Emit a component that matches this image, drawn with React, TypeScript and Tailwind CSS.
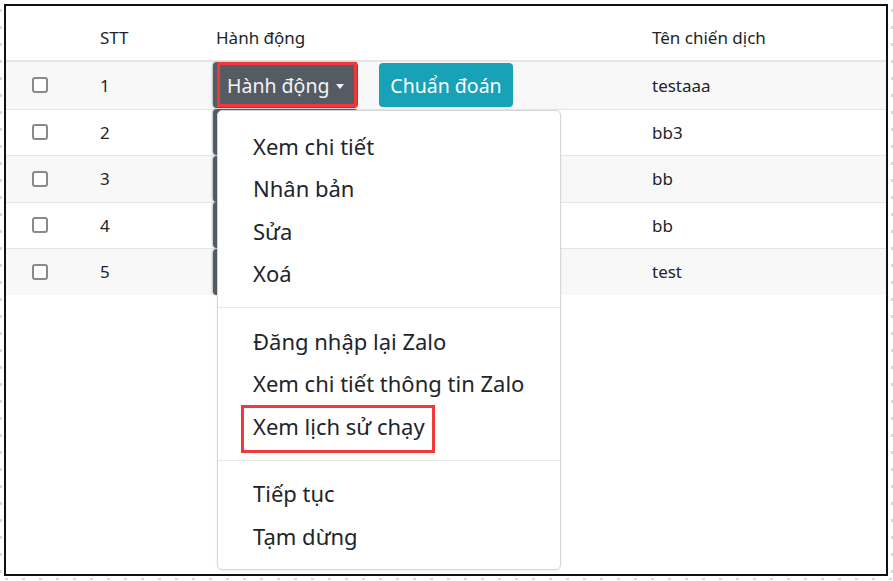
import * as React from "react";

const rows = [
  { id: 1, name: "testaaa" },
  { id: 2, name: "bb3" },
  { id: 3, name: "bb" },
  { id: 4, name: "bb" },
  { id: 5, name: "test" },
];

const menuGroups = [
  ["Xem chi tiết", "Nhân bản", "Sửa", "Xoá"],
  ["Đăng nhập lại Zalo", "Xem chi tiết thông tin Zalo", "Xem lịch sử chạy"],
  ["Tiếp tục", "Tạm dừng"],
];

function Checkbox() {
  return <span className="block h-[16px] w-[16px] rounded-[3px] border-2 border-[#8a8a8a] bg-white" />;
}

function ActionButton({ highlight }: { highlight?: boolean }) {
  return (
    <div className="relative flex h-[46px] w-[145px] shrink-0 items-center rounded-[4px] bg-[#555b62] pl-[14px] text-[19.5px] text-[#f4f4f4] shadow-[-1px_0_2px_rgba(0,0,0,0.25)]">
      <span>Hành động</span>
      <span className="ml-[7px] mt-[2px] h-0 w-0 border-x-[4px] border-t-[5px] border-x-transparent border-t-[#f4f4f4]" />
      {highlight && (
        <span className="pointer-events-none absolute bottom-[1px] left-[4px] right-[1px] top-0 border-[3px] border-[#f2383b]" />
      )}
    </div>
  );
}

function ActionMenu() {
  return (
    <div className="absolute left-[211px] top-[104px] z-10 w-[344px] rounded-[5px] border border-[#d5d7da] bg-white pb-[11px] pt-[14px] text-[22px] text-[#212529] shadow-[0_1px_3px_rgba(0,0,0,0.08)]">
      {menuGroups.map((group, gi) => (
        <div key={gi}>
          {gi > 0 && <div className="my-[12px] h-px bg-[#e6e8ea]" />}
          {group.map((label) => (
            <div key={label} className="relative flex h-[42.5px] items-center pl-[35px]">
              {label}
              {label === "Xem lịch sử chạy" && (
                <span className="pointer-events-none absolute left-[23px] top-0 h-[48px] w-[194px] border-[3px] border-[#f2383b]" />
              )}
            </div>
          ))}
        </div>
      ))}
    </div>
  );
}

export default function App() {
  return (
    <div className="flex h-[581px] w-[893px] flex-col bg-white text-[#212529]" style={{ fontFamily: '"Noto Sans", "Open Sans", sans-serif' }}>
      <div className="h-[4px] shrink-0" />
      <div className="flex h-[572px] shrink-0">
        <div className="w-[4px] shrink-0 bg-[repeating-linear-gradient(to_bottom,transparent_0_5px,#d6d9dc_5px_8px,transparent_8px_17px)] bg-[length:2px_100%] bg-no-repeat" />
        <div className="relative h-[572px] w-[884px] shrink-0 border-2 border-[#111]">
          <div className="flex h-[56px] items-end border-b-2 border-[#e3e5e8] pb-[10px] text-[17px]">
            <div className="w-[82px] shrink-0" />
            <div className="w-[116px] shrink-0 pl-[12px]">STT</div>
            <div className="w-[436px] shrink-0 pl-[12px]">Hành động</div>
            <div className="pl-[12px]">Tên chiến dịch</div>
          </div>
          {rows.map((r, i) => (
            <div
              key={r.id}
              className={`flex h-[46.5px] items-center text-[17px] ${i > 0 ? "border-t border-[#e3e5e8]" : ""} ${i % 2 === 0 ? "bg-[#f8f8f8]" : "bg-white"}`}
            >
              <div className="flex w-[82px] shrink-0 pl-[26px]">
                <Checkbox />
              </div>
              <div className="w-[116px] shrink-0 pl-[12px]">{r.id}</div>
              <div className="flex w-[436px] shrink-0 items-center gap-[21px] pl-[9px]">
                <ActionButton highlight={i === 0} />
                <div className="flex h-[44px] w-[134px] items-center justify-center rounded-[4px] bg-[#17a2b8] text-[19.5px] text-white">
                  Chuẩn đoán
                </div>
              </div>
              <div className="pl-[12px]">{r.name}</div>
            </div>
          ))}
          <ActionMenu />
        </div>
        <div className="w-[5px] shrink-0 bg-[repeating-linear-gradient(to_bottom,transparent_0_5px,#d6d9dc_5px_8px,transparent_8px_17px)] bg-[length:2px_100%] bg-[position:3px_0] bg-no-repeat" />
      </div>
      <div className="h-[5px] shrink-0 bg-[repeating-linear-gradient(to_right,transparent_0_5px,#d6d9dc_5px_8px,transparent_8px_17px)] bg-[length:100%_2px] bg-[position:0_2px] bg-no-repeat" />
    </div>
  );
}
